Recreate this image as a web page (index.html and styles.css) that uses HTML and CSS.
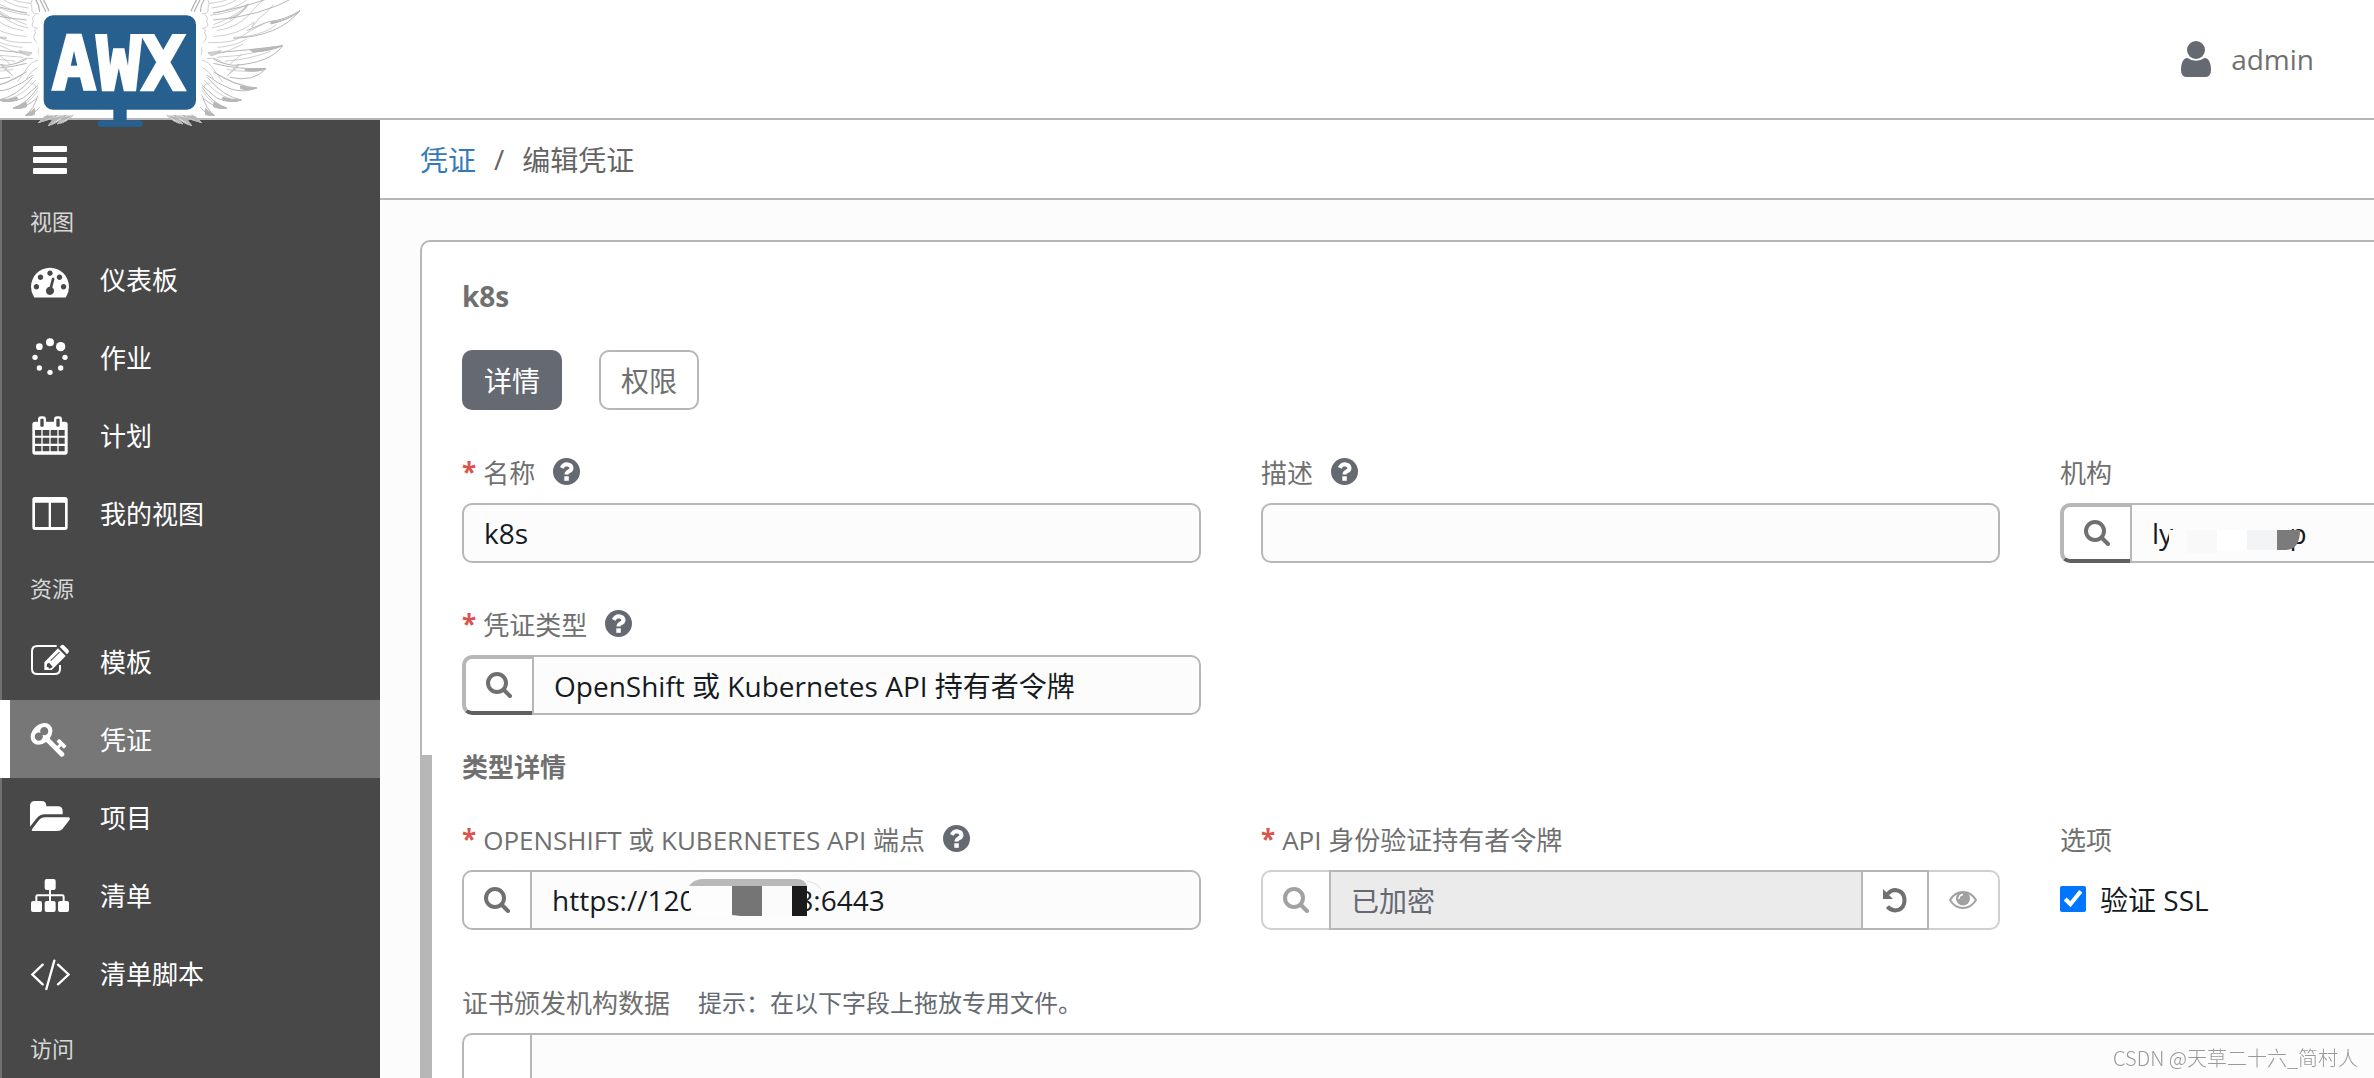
FILE: index.html
```html
<!DOCTYPE html>
<html lang="zh-CN">
<head>
<meta charset="utf-8">
<title>AWX - 编辑凭证</title>
<link rel="stylesheet" href="styles.css">
</head>
<body>
<svg class="sprite" aria-hidden="true">
  <symbol id="i-search" viewBox="0 0 26 26"><circle cx="11" cy="11" r="9" fill="none" stroke="currentColor" stroke-width="4"/><path d="M18 18l6 6" stroke="currentColor" stroke-width="4" stroke-linecap="round"/></symbol>
  <symbol id="i-help" viewBox="0 0 27 27"><circle cx="13.5" cy="13.5" r="13.5" fill="currentColor"/><path d="M8.7 9.8Q10.5 6.200 13.900 6.200Q18.500 6.700 18.500 10.200Q18.300 12.300 15.500 13.500Q13.500 14.500 13.500 16.600" fill="none" stroke="#fff" stroke-width="4"/><path d="M11.300 18.300h4.500v4.500h-4.500z" fill="#fff"/></symbol>
  <symbol id="i-wing" viewBox="0 0 900 384" overflow="visible">
    <g fill="#fff" stroke="#b7b7b7" stroke-width="3" stroke-linejoin="round">
      <path d="M640 60Q780 50 888-10L820-10Q740 20 640 40"/>
      <path d="M700 115Q835 110 900 32Q855 60 803 66Q775 76 740 92"/>
      <path d="M814 64Q860 66 900 32Q862 62 812 72z" fill="#b7b7b7"/>
      <path d="M625 160Q750 150 848 137Q810 190 700 196Q660 190 640 176"/>
      <path d="M760 156Q810 154 848 137Q800 146 750 150z" fill="#b7b7b7"/>
      <path d="M640 190Q720 210 798 206Q760 248 690 232"/>
      <path d="M735 212Q775 218 798 206Q765 204 735 208z" fill="#b7b7b7"/>
      <path d="M640 215Q700 258 770 264Q730 280 690 266Q650 250 622 226"/>
      <path d="M722 266Q750 272 770 264Q745 264 722 258z" fill="#b7b7b7"/>
      <path d="M622 232Q670 290 724 300Q690 312 650 294L606 256"/>
      <path d="M606 262Q640 312 680 324Q650 330 606 292"/>
      <path d="M606 286Q620 330 643 346Q620 346 600 320"/>
      <path d="M668 299Q700 309 724 300Q700 300 668 292zM640 320Q665 329 680 324Q660 316 642 307zM617 344Q632 348 643 346Q626 334 616 326z" fill="#b7b7b7"/>
      <path d="M545 344Q575 362 605 368Q590 353 575 344zM520 344Q550 372 575 377Q562 358 550 344zM499 344Q520 368 548 372Q535 354 525 344z" fill="#e0e0e0"/>
      <path d="M562 349L605 368L585 350zM534 350L575 377L558 355zM510 350L548 372L528 352z" fill="#b7b7b7"/>
    </g>
    <g fill="none" stroke="#b7b7b7" stroke-width="2">
      <path d="M573 34Q580 16 592-5M582 36Q592 15 602-5M602 36Q600 15 616-5" stroke-width="4"/>
      <path d="M604 42Q628 42 624 24Q632 12 622-5M606 85Q632 82 620 64Q626 50 614 44M608 128Q626 116 614 98Q620 88 610 84M604 165Q608 148 602 138M606 180Q628 186 640 206L668 246M620 176Q650 170 670 190"/>
      <path d="M628 10Q665 8 692-5M634 24Q680 20 716-5M640 38Q700 32 746-4M636 84Q700 74 745 12Q700 38 630 46M640 74Q705 52 745 12M650 92Q720 82 760 30Q775 10 790 0M640 110Q720 104 762 66L756 82L778 54Q800 40 820 14M625 128Q700 130 724 110Q750 90 790 72M652 142Q700 140 738 118M700 112Q780 112 830 74M640 165Q690 154 730 132M650 172Q720 170 790 152M674 184Q750 178 812 154M690 192L726 162M680 208Q730 218 772 210M652 222Q700 250 742 260M612 240Q650 284 690 296M606 272Q630 306 660 320M606 202Q626 210 640 236M610 262Q620 246 630 250"/>
      <path d="M624 158L664 152L634 168zM700 205Q730 180 710 204L680 228M700 50Q735 38 745 12Q722 42 690 58z" fill="#d4d4d4"/>
    </g>
  </symbol>
</svg>

<header class="topbar">
  <svg class="logo" viewBox="0 0 900 384" role="img" aria-label="AWX">
    <use href="#i-wing" width="900" height="384"/>
    <use href="#i-wing" width="900" height="384" transform="translate(720 0) scale(-1 1)"/>
    <rect x="116" y="36" width="487" height="309" rx="38" fill="#fff"/>
    <rect x="131" y="46" width="457" height="283" rx="28" fill="#27608f"/>
    <path d="M340 325h40v36h-40z" fill="#27608f"/>
    <rect x="293" y="361" width="135" height="20" rx="10" fill="#27608f"/>
    <text x="356" y="271" text-anchor="middle" class="logo-text">AWX</text>
  </svg>
  <a class="user" href="#">
    <svg width="30" height="36" viewBox="0 0 90 108" fill="currentColor"><circle cx="45" cy="27" r="27"/><path d="M18 50Q45 68 72 50Q90 54 90 86Q90 108 72 108H18Q0 108 0 86Q0 54 18 50z"/></svg>
    <span>admin</span>
  </a>
</header>

<div class="layout">
  <nav class="sidebar">
    <button class="menu-toggle" type="button" aria-label="菜单">
      <svg width="34" height="28" viewBox="0 0 34 28" fill="currentColor"><rect width="34" height="6" rx="1"/><rect y="11" width="34" height="6" rx="1"/><rect y="22" width="34" height="6" rx="1"/></svg>
    </button>
    <h2 class="nav-title nav-title-first">视图</h2>
    <a class="nav-item" href="#">
      <svg viewBox="90 60 120 120"><path transform="translate(93 70) scale(.0636)" d="M384 1152q0-53-37.500-90.500t-90.500-37.500-90.500 37.500-37.500 90.500 37.500 90.500 90.500 37.500 90.500-37.500 37.500-90.500zm192-448q0-53-37.500-90.500t-90.500-37.500-90.500 37.500-37.500 90.500 37.500 90.500 90.500 37.500 90.500-37.500 37.500-90.500zm428 481l101-382q6-26-7.500-48.500t-38.500-29.500-48 6.500-30 39.500l-101 382q-60 5-107 43.500t-63 98.500q-20 77 20 146t117 89 146-20 89-117q16-60-6-117t-72-91zm660-33q0-53-37.500-90.500t-90.500-37.500-90.500 37.500-37.500 90.500 37.500 90.500 90.500 37.500 90.500-37.500 37.500-90.500zm-640-640q0-53-37.500-90.500t-90.500-37.500-90.500 37.500-37.500 90.500 37.500 90.500 90.500 37.500 90.500-37.500 37.500-90.500zm448 192q0-53-37.500-90.500t-90.500-37.500-90.500 37.500-37.500 90.500 37.500 90.500 90.500 37.500 90.500-37.500 37.500-90.500zm320 448q0 261-141 483-19 29-54 29h-1402q-35 0-54-29-141-221-141-483 0-182 71-348t191-286 286-191 348-71 348 71 286 191 191 286 71 348z"/></svg>
      <span>仪表板</span>
    </a>
    <a class="nav-item" href="#">
      <svg viewBox="90 291 120 120"><circle cx="150" cy="307" r="12"/><circle cx="182" cy="320" r="14"/><circle cx="118" cy="320" r="10"/><circle cx="105" cy="352" r="8"/><circle cx="195" cy="352" r="8"/><circle cx="118" cy="384" r="8"/><circle cx="182" cy="384" r="8"/><circle cx="150" cy="397" r="8"/></svg>
      <span>作业</span>
    </a>
    <a class="nav-item" href="#">
      <svg viewBox="90 525 120 120"><path fill-rule="evenodd" d="M105 545h90q8 0 8 8v83q0 8-8 8h-90q-8 0-8-8v-83q0-8 8-8zM105 570v17h19v-17zM128 570v17h20v-17zM152 570v17h20v-17zM176 570v17h18v-17zM105 593v18h19v-18zM128 593v18h20v-18zM152 593v18h20v-18zM176 593v18h18v-18zM105 618v16h19v-16zM128 618v16h20v-16zM152 618v16h20v-16zM176 618v16h18v-16z"/><rect x="114" y="529" width="24" height="37" rx="9"/><rect x="162" y="529" width="24" height="37" rx="9"/><rect class="hole" x="121" y="536" width="10" height="24" rx="3"/><rect class="hole" x="169" y="536" width="10" height="24" rx="3"/></svg>
      <span>计划</span>
    </a>
    <a class="nav-item" href="#">
      <svg viewBox="90 759 120 120"><path fill-rule="evenodd" d="M105 771h90q8 0 8 8v83q0 8-8 8h-90q-8 0-8-8v-83q0-8 8-8zM105 788v73h41v-73zM153 788v73h42v-73z"/></svg>
      <span>我的视图</span>
    </a>
    <h2 class="nav-title">资源</h2>
    <a class="nav-item" href="#">
      <svg viewBox="90 303 120 120"><path class="line" d="M170 318H112Q96 318 96 334V386Q96 402 112 402H164Q180 402 180 386V375"/><path fill-rule="evenodd" d="M174 325L197 348L155 390H133V367zM141 372L140 381L146 382V386L153 385L158 380L147 368zM153 363L180 337L178 335L151 361z"/><path d="M179 320L185 315Q189 313 193 317L205 329Q209 333 205 338L201 343z"/></svg>
      <span>模板</span>
    </a>
    <a class="nav-item active" href="#" aria-current="page">
      <svg viewBox="90 537 120 120"><path transform="translate(92 541) scale(.0636)" d="M832 512q0-80-56-136t-136-56-136 56-56 136q0 42 19 83-41-19-83-19-80 0-136 56t-56 136 56 136 136 56 136-56 56-136q0-42-19-83 41 19 83 19 80 0 136-56t56-136zm851 704q0 17-49 66t-66 49q-9 0-28.500-16t-36.500-33-38.500-40-24.500-26l-96 96 220 220q28 28 28 68 0 42-39 81t-81 39q-40 0-68-28l-671-671q-176 131-365 131-163 0-265.500-102.500t-102.500-265.500q0-160 95-313t248-248 313-95q163 0 265.500 102.500t102.500 265.500q0 189-131 365l355 355 96-96q-3-3-26-24.500t-40-38.500-33-36.500-16-28.500q0-17 49-66t66-49q13 0 23 10 6 6 46 44.500t82 79.500 86.500 86 73 78 28.500 41z"/></svg>
      <span>凭证</span>
    </a>
    <a class="nav-item" href="#">
      <svg viewBox="90 51 120 120"><path d="M90 140V78q0-15 15-15h19q15 0 15 16h35q14 0 14 14v10H134q-14 0-24 12zM134 112H206q6 1 2 8L188 146q-6 7-16 7H98q-5-1-1-7L117 120q6-8 17-8z"/></svg>
      <span>项目</span>
    </a>
    <a class="nav-item" href="#">
      <svg viewBox="90 285 120 120"><rect x="134" y="297" width="33" height="33" rx="6"/><rect x="93" y="363" width="33" height="33" rx="6"/><rect x="134" y="363" width="33" height="33" rx="6"/><rect x="174" y="363" width="33" height="33" rx="6"/><path class="line" d="M150 328V365M109 365V350Q109 346 113 346H187Q191 346 191 350V365"/></svg>
      <span>清单</span>
    </a>
    <a class="nav-item" href="#">
      <svg viewBox="90 519 120 120"><path class="line line-thick" d="M128 554L97 583.500L128 613M174 554L206 583.500L174 613M163 542L139 627"/></svg>
      <span>清单脚本</span>
    </a>
    <h2 class="nav-title">访问</h2>
  </nav>

  <main class="main">
    <nav class="breadcrumb"><a href="#">凭证</a><span>/</span><span>编辑凭证</span></nav>
    <section class="panel">
      <h1 class="panel-title">k8s</h1>
      <div class="tabs">
        <button class="tab tab-active" type="button">详情</button>
        <button class="tab" type="button">权限</button>
      </div>
      <form>
        <div class="fields">
          <div class="field">
            <div class="label"><span class="req">*</span><label for="name">名称</label><svg class="help"><use href="#i-help"/></svg></div>
            <div class="control"><input id="name" type="text" value="k8s"></div>
          </div>
          <div class="field">
            <div class="label"><label for="desc">描述</label><svg class="help"><use href="#i-help"/></svg></div>
            <div class="control"><input id="desc" type="text"></div>
          </div>
          <div class="field">
            <div class="label"><label for="org">机构</label></div>
            <div class="control">
              <button class="addon lookup" type="button" aria-label="查找机构"><svg class="icon"><use href="#i-search"/></svg></button>
              <input id="org" type="text" value="ly&#160;&#160;&#160;&#160;&#160;&#160;&#160;&#160;&#160;&#160;&#160;&#160;&#160;&#160;&#160;&#160;p">
              <svg class="mask mask-org" viewBox="0 0 132 24"><path d="M0 0H18V22H0z" fill="#fcfcfc"/><path d="M18 0H48V23H18z" fill="#f9f9f9"/><path d="M48 0H78V21H48z" fill="#fff"/><path d="M78 0H108V20H78z" fill="#f3f4f6"/><path d="M108 0H131Q131 20 116 20H108z" fill="#7b7b7b"/></svg>
            </div>
          </div>
          <div class="field">
            <div class="label"><span class="req">*</span><label for="type">凭证类型</label><svg class="help"><use href="#i-help"/></svg></div>
            <div class="control">
              <button class="addon lookup" type="button" aria-label="查找凭证类型"><svg class="icon"><use href="#i-search"/></svg></button>
              <input id="type" type="text" value="OpenShift 或 Kubernetes API 持有者令牌">
            </div>
          </div>
        </div>

        <div class="subform">
          <h2 class="subform-title">类型详情</h2>
          <div class="fields">
            <div class="field">
              <div class="label"><span class="req">*</span><label for="host">OPENSHIFT 或 KUBERNETES API 端点</label><svg class="help"><use href="#i-help"/></svg></div>
              <div class="control">
                <button class="addon" type="button" aria-label="查找端点"><svg class="icon"><use href="#i-search"/></svg></button>
                <input id="host" type="text" value="https://120&#160;&#160;&#160;&#160;&#160;&#160;&#160;&#160;&#160;&#160;&#160;&#160;&#160;&#160;8:6443">
                <svg class="mask mask-host" viewBox="0 0 134 38"><path d="M0 7Q5 0 14 0H108Q116 0 118 7z" fill="#b9b9b9"/><path d="M118 2Q128 4 132 10" fill="none" stroke="#ddd"/><path d="M0 7H43V36H12Q0 36 0 20z" fill="#fdfdfd"/><path d="M43 7H73V37H52L43 36z" fill="#757575"/><path d="M73 7H103V37H73z" fill="#fbfbfb"/><path d="M103 7H118V37H103z" fill="#1b1b1c"/></svg>
              </div>
            </div>
            <div class="field">
              <div class="label"><span class="req">*</span><label for="token">API 身份验证持有者令牌</label></div>
              <div class="control">
                <button class="addon" type="button" disabled aria-label="查找令牌"><svg class="icon"><use href="#i-search"/></svg></button>
                <input id="token" class="locked" type="text" value="已加密" readonly>
                <button class="addon addon-mid" type="button" aria-label="恢复"><svg class="undo" viewBox="0 0 24 25"><path d="M4.500 6Q8 2 12 2Q21.500 3 21.500 12.500Q21 22 12 22.500Q7 22 4.500 18.500" fill="none" stroke="currentColor" stroke-width="4"/><path d="M0 1V11H10z" fill="currentColor"/></svg></button>
                <button class="addon addon-end" type="button" disabled aria-label="显示"><svg class="eye" viewBox="0 0 28 18"><path d="M1 9Q6 1 14 1T27 9Q22 17 14 17T1 9z" fill="none" stroke="currentColor" stroke-width="2"/><circle cx="14" cy="7.500" r="7" fill="currentColor"/><path d="M10 8Q10 4 14 3.500" fill="none" stroke="#fff" stroke-width="1.500"/></svg></button>
              </div>
            </div>
            <div class="field">
              <div class="label"><span>选项</span></div>
              <label class="check"><input type="checkbox" checked><span>验证 SSL</span></label>
            </div>
            <div class="field field-full">
              <div class="label"><label for="ca">证书颁发机构数据</label><span class="hint">提示：在以下字段上拖放专用文件。</span></div>
              <div class="control control-tall">
                <button class="addon" type="button" aria-label="查找证书"></button>
                <textarea id="ca"></textarea>
              </div>
            </div>
          </div>
        </div>
      </form>
    </section>
  </main>
</div>
<div class="watermark">CSDN @天草二十六_简村人</div>
</body>
</html>
```
FILE: styles.css
```css
* { box-sizing: border-box; }

body {
  margin: 0;
  height: 100vh;
  overflow: hidden;
  display: flex;
  flex-direction: column;
  background: #fcfcfc;
  color: #707070;
  font-family: "Open Sans", "Noto Sans CJK SC", sans-serif;
  font-size: 28px;
}

a { text-decoration: none; }

h1, h2 { margin: 0; }

button, input, textarea { font: inherit; margin: 0; }

.sprite { display: none; }

/* Header */
.topbar {
  position: relative;
  z-index: 1;
  flex: none;
  display: flex;
  justify-content: space-between;
  align-items: flex-start;
  height: 120px;
  padding-right: 60px;
  border-bottom: 2px solid #b7b7b7;
  background: #fff;
}

.logo { width: 300px; height: 128px; }

.logo-text {
  font-family: "DejaVu Sans Mono", monospace;
  font-weight: 700;
  font-size: 222px;
  fill: #fff;
  stroke: #fff;
  stroke-width: 8px;
}

.user {
  display: flex;
  align-items: center;
  gap: 20px;
  height: 118px;
  color: #707070;
}

.user svg { color: #646972; }

/* Side navigation */
.layout { flex: 1; display: flex; min-height: 0; }

.sidebar {
  flex: none;
  width: 380px;
  border-left: 2px solid #707070;
  background: #484848;
  color: #fff;
}

.menu-toggle {
  display: flex;
  align-items: center;
  height: 80px;
  padding: 0 31px;
  border: 0;
  background: none;
  color: #fff;
}

.nav-title {
  height: 70px;
  padding: 20px 28px 0;
  font-size: 22px;
  font-weight: 400;
  line-height: 32px;
  color: #d7d7d7;
}

.nav-title-first { height: 40px; padding-top: 5px; }

.nav-item {
  display: flex;
  align-items: center;
  gap: 30px;
  height: 78px;
  padding-left: 28px;
  font-size: 26px;
  color: #fff;
}

.nav-item svg { width: 40px; height: 40px; fill: currentColor; }
.nav-item .line { fill: none; stroke: currentColor; stroke-width: 6px; }
.nav-item .line-thick { stroke-width: 7px; stroke-linecap: round; }
.nav-item .hole { fill: #484848; }

.active {
  margin-left: -2px;
  padding-left: 20px;
  border-left: 10px solid #fff;
  background: #777;
}

/* Content */
.main { flex: 1; min-width: 0; overflow: hidden; }

.breadcrumb {
  display: flex;
  align-items: center;
  gap: 18px;
  height: 80px;
  padding-left: 40px;
  border-bottom: 2px solid #b7b7b7;
  background: #fff;
  color: #646464;
}

.breadcrumb a { color: #337ab7; }

.panel {
  width: max-content;
  min-width: calc(100% - 80px);
  margin: 40px;
  padding: 40px 40px 60px;
  border: 2px solid #b7b7b7;
  border-radius: 10px;
  background: #fff;
}

.panel-title { font-size: 28px; line-height: 28px; margin-bottom: 40px; }

.tabs { display: flex; gap: 37px; margin-bottom: 48px; }

.tab {
  width: 100px;
  height: 60px;
  padding: 0;
  border: 2px solid #b7b7b7;
  border-radius: 10px;
  background: #fff;
  color: #707070;
}

.tab-active { border-color: #646972; background: #646972; color: #fff; }

/* Form */
.fields {
  display: grid;
  grid-template-columns: repeat(3, minmax(739px, 1fr));
  gap: 47px 60px;
}

.field-full { grid-column: 1 / -1; }

.label {
  display: flex;
  align-items: center;
  height: 27px;
  margin-bottom: 18px;
  font-size: 26px;
}

.req { margin-right: 7px; font-weight: 700; color: #d9534f; }

.help { width: 27px; height: 27px; margin-left: 18px; color: #646972; }

.hint { margin-left: 28px; font-size: 24px; color: #646972; }

.control { position: relative; display: flex; height: 60px; }

.control-tall { height: 240px; }

.control input,
.control textarea {
  flex: 1;
  min-width: 0;
  padding: 0 20px;
  border: 2px solid #b7b7b7;
  border-radius: 10px;
  background: #fcfcfc;
  color: #161b1f;
  outline: 0;
  resize: none;
}

.control .addon + input,
.control .addon + textarea { border-radius: 0 10px 10px 0; }

.control .addon + .locked { border-radius: 0; background: #ebebeb; color: #646972; }

.addon {
  flex: none;
  display: flex;
  align-items: center;
  width: 68px;
  padding: 0 0 0 20px;
  border: 2px solid #b7b7b7;
  border-right: 0;
  border-radius: 10px 0 0 10px;
  background: #fff;
  color: #707070;
}

.addon:disabled { opacity: .65; }

.lookup {
  width: 70px;
  border-width: 4px 0 4px 4px;
  border-bottom-color: #606060;
}

.addon-mid { width: 66px; border-left: 0; border-right: 2px solid #b7b7b7; border-radius: 0; }

.addon-end { width: 71px; border-left: 0; border-right: 2px solid #b7b7b7; border-radius: 0 10px 10px 0; }

.icon { width: 26px; height: 26px; }
.undo { width: 24px; height: 25px; }
.eye { width: 28px; height: 18px; }

.mask { position: absolute; }
.mask-org { left: 109px; top: 27px; width: 132px; height: 24px; }
.mask-host { left: 227px; top: 9px; width: 134px; height: 38px; }

.check {
  display: flex;
  align-items: center;
  gap: 14px;
  height: 58px;
  color: #161b1f;
}

.check input { width: 26px; height: 26px; }

.subform {
  margin: 40px 0 0 -42px;
  padding-left: 30px;
  border-left: 12px solid #b7b7b7;
}

.subform-title { font-size: 26px; line-height: 24px; margin-bottom: 46px; }

.subform .fields { row-gap: 58px; }

.watermark {
  position: fixed;
  right: 16px;
  bottom: 6px;
  font: 300 20px/28px "Noto Sans CJK SC", sans-serif;
  color: #999;
}
```
